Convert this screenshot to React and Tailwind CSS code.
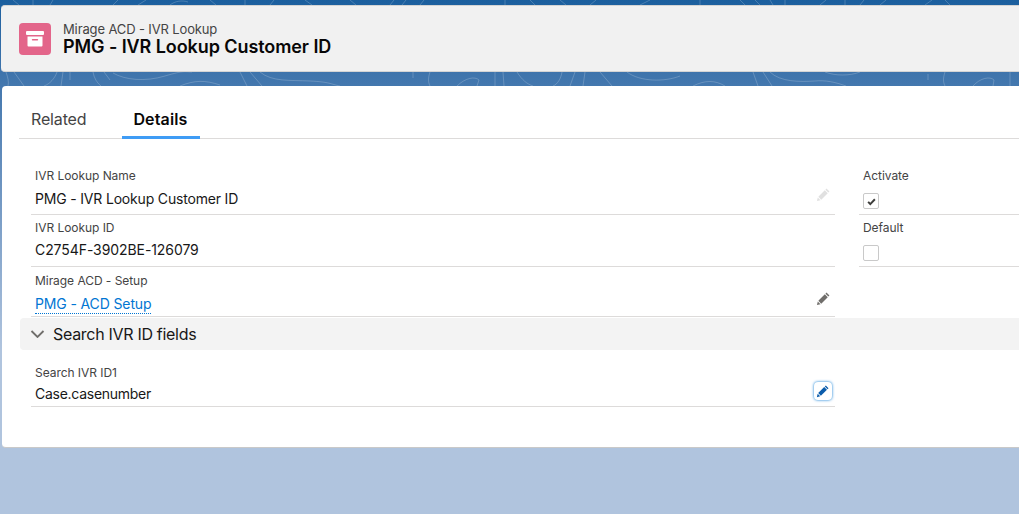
// contour lines of the page background, only the strips above and below the header show
const contours = [
  'M6 72 C 8 78, 9 82, 8 86 M14 72 L 24 86 M57 72 C 55 78, 50 84, 44 86 M63 72 L 61 86 M70 72 V 80',
  'M93 72 C 94 78, 97 83, 101 86 M104 72 L 110 80 M113 73 C 125 80, 145 82, 165 76 S 185 72, 192 72',
  'M180 86 C 195 80, 205 80, 220 85 M240 72 L 247 86 M250 72 L 262 86 M260 72 C 272 82, 290 80, 310 81 S 330 84, 340 86',
  'M413 72 V 78 M430 72 C 428 78, 428 82, 430 86 M457 86 C 465 78, 475 76, 479 80 L 477 86 M495 72 V 86 M503 72 L 504 86',
  'M517 72 C 522 80, 527 84, 533 86 M562 72 C 561 78, 558 84, 553 86 M575 72 L 570 86 M585 72 L 583 86 M600 72 L 612 86',
  'M627 72 C 640 82, 665 82, 680 76 M693 86 C 705 80, 715 80, 725 86 M753 72 L 758 86 M763 72 L 772 86',
  'M770 72 C 780 82, 800 82, 815 81 C 825 80, 835 82, 846 86 M825 72 C 835 76, 850 76, 860 72',
  'M928 74 V 80 M945 72 C 943 78, 943 82, 945 86 M973 86 C 980 78, 990 76, 994 80 L 993 86 M1010 72 V 86',
  'M13 0 L 19 5 M33 0 V 5 M53 0 L 50 5 M113 5 L 118 0 M138 5 L 146 0 M170 5 C 175 1, 182 0, 188 2 M210 0 L 216 5 M245 0 V 5 M270 5 L 274 0 M305 0 L 312 5',
  'M350 0 L 356 5 M390 5 L 394 0 M402 5 L 406 0 M420 5 L 424 0 M505 5 V 0 M530 0 L 535 5 M560 0 L 566 5 M590 5 L 596 0 M640 5 L 650 0',
  'M700 0 V 5 M740 0 L 745 5 M755 0 L 760 5 M770 0 L 773 5 M785 5 V 0 M820 5 L 826 0 M845 5 V 0 M860 5 L 864 0 M880 5 L 886 0 M925 5 L 932 0 M945 0 L 950 5',
];

function PencilIcon({ className }) {
  return (
    <svg viewBox="0 0 16 16" className={className} fill="currentColor">
      <path d="M11.2 1.7 L14.3 4.8 L13.2 5.9 L10.1 2.8 Z" />
      <path d="M9.4 3.5 L12.5 6.6 L5.6 13.5 L2.5 10.4 Z" />
      <path d="M1.9 11.2 L4.8 14.1 L1 15 Z" />
    </svg>
  );
}

function Field({ label, children, action, className = '' }) {
  return (
    <div className={`relative border-b border-[#dddbda] px-1 ${className}`}>
      <p className="text-[12px] leading-[18px] tracking-[-0.05px] text-[#444444]">{label}</p>
      {children}
      {action}
    </div>
  );
}

export default function App() {
  return (
    <div
      className="relative h-[514px] w-[1019px] overflow-hidden bg-[#b0c4de] bg-gradient-to-b from-[#1b5f9e] from-0% to-[#b0c4de] to-[68%] pt-[5px] pl-[1px] text-[#181818]"
      style={{ fontFamily: 'Inter, "Liberation Sans", sans-serif' }}
    >
      <svg className="absolute inset-0 h-[100px] w-[1019px]" viewBox="0 0 1019 100" fill="none" stroke="#ffffff" strokeOpacity="0.2">
        {contours.map((d) => <path key={d} d={d} />)}
      </svg>

      {/* Page header */}
      <header className="relative flex h-[67px] items-center gap-[12px] rounded-l-[4px] border-y border-[#d4d4d4] bg-[#f1f1f1] pl-[18px]">
        <div className="flex h-8 w-8 items-center justify-center rounded-[4px] bg-[#e3658a]">
          <svg viewBox="0 0 20 20" className="h-[20px] w-[20px]" fill="#ffffff">
            <rect x="1" y="2" width="18" height="4" rx="1" />
            <path d="M2.5 7.5 H17.5 V16.5 a1 1 0 0 1 -1 1 H3.5 a1 1 0 0 1 -1 -1 Z M7.5 10 a.6.6 0 0 0 0 1.4 H12.5 a.6.6 0 0 0 0 -1.4 Z" fillRule="evenodd" />
          </svg>
        </div>
        <div className="-mt-px">
          <p className="text-[13px] leading-[16px] tracking-[-0.13px] text-[#444444]">Mirage ACD - IVR Lookup</p>
          <h1 className="text-[18px] font-semibold leading-[19px] tracking-[-0.08px] text-[#080707]">PMG - IVR Lookup Customer ID</h1>
        </div>
      </header>

      {/* Record card */}
      <main className="relative mt-[14px] ml-[1px] h-[362px] rounded-l-[4px] border-b border-[#c9c9c9] bg-white pl-[17px] pt-[13px]">
        <nav className="flex h-[40px] items-center border-b border-[#dddbda] text-[16px]">
          <a className="pl-[12px] pr-[36px] tracking-[-0.15px] text-[#444444]">Related</a>
          <a className="relative flex h-full items-center pl-[11px] pr-[12px] font-semibold tracking-[0.15px] text-[#080707]">
            Details
            <span className="absolute inset-x-0 -bottom-px h-[3px] bg-[#3f9cf5]" />
          </a>
        </nav>

        <div className="grid grid-cols-[804px_160px] gap-x-[24px] pl-[12px] pt-[28px]">
          <div>
            <Field label="IVR Lookup Name" className="h-[48px]" action={<PencilIcon className="absolute right-[4px] top-[20px] h-[15px] w-[15px] text-[#e0e0e0]" />}>
              <p className="mt-[4px] text-[14px] leading-[20px] tracking-[-0.18px]">PMG - IVR Lookup Customer ID</p>
            </Field>
            <Field label="IVR Lookup ID" className="mt-[4px] h-[48px]">
              <p className="mt-[3px] text-[14px] leading-[20px] tracking-[-0.08px]">C2754F-3902BE-126079</p>
            </Field>
            <Field label="Mirage ACD - Setup" className="mt-[5px] h-[45px]" action={<PencilIcon className="absolute right-[4px] top-[19px] h-[15px] w-[15px] text-[#706e6b]" />}>
              <a className="mt-[5px] inline-block border-b border-dotted border-[#0176d3] text-[14px] leading-[18px] tracking-[-0.13px] text-[#0176d3]">PMG - ACD Setup</a>
            </Field>
          </div>
          <div>
            <Field label="Activate" className="h-[48px]">
              <span className="mt-[8px] flex h-4 w-4 items-center justify-center rounded-[2px] border border-[#c9c9c9]">
                <svg viewBox="0 0 12 12" className="h-[9px] w-[9px]" fill="none" stroke="#3e3e3c" strokeWidth="2.6"><path d="M1.5 6.5 L4.4 9.4 L10.5 3" /></svg>
              </span>
            </Field>
            <Field label="Default" className="mt-[4px] h-[48px]">
              <span className="mt-[8px] block h-4 w-4 rounded-[2px] border border-[#c9c9c9]" />
            </Field>
          </div>
        </div>

        <div className="ml-[1px] mt-px flex h-[32px] items-center gap-[8px] rounded-l-[4px] bg-[#f3f3f3] pl-[10px]">
          <svg viewBox="0 0 14 8" className="h-[8px] w-[15px]" fill="none" stroke="#706e6b" strokeWidth="1.8"><path d="M1 1 L7 7 L13 1" /></svg>
          <h2 className="text-[16px] leading-[20px] tracking-[-0.3px] text-[#181818]">Search IVR ID fields</h2>
        </div>

        <div className="w-[816px] pl-[12px] pt-[14px]">
          <Field
            label="Search IVR ID1"
            className="h-[43px]"
            action={
              <span className="absolute right-[3px] top-[18px] flex h-[18px] w-[18px] items-center justify-center rounded-[4px] bg-white shadow-[0_0_3px_#0176d3]">
                <PencilIcon className="h-[14px] w-[14px] text-[#0b5cab]" />
              </span>
            }
          >
            <p className="mt-[2px] text-[14px] leading-[20px] tracking-[-0.27px]">Case.casenumber</p>
          </Field>
        </div>
      </main>
    </div>
  );
}
